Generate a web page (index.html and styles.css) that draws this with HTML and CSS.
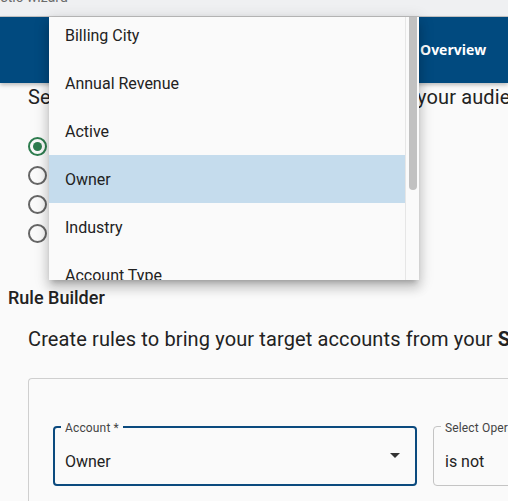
FILE: index.html
```html
<!DOCTYPE html>
<html>
<head>
<meta charset="utf-8">
<link rel="stylesheet" href="styles.css">
</head>
<body>
<div class="tabstrip"><span class="tabtitle">elastic-wizard</span></div>
<header class="appbar">
  <nav class="nav"><span class="nav-item">Overview</span></nav>
</header>
<main class="page">
  <p class="intro">Select one of the following options to build your audience</p>
  <div class="radios">
    <label class="radio-row"><span class="radio checked"></span><span class="radio-label">Rules</span></label>
    <label class="radio-row"><span class="radio"></span><span class="radio-label">List</span></label>
    <label class="radio-row"><span class="radio"></span><span class="radio-label">Report</span></label>
    <label class="radio-row"><span class="radio"></span><span class="radio-label">Upload</span></label>
  </div>
  <h2 class="section-title">Rule Builder</h2>
  <p class="lead">Create rules to bring your target accounts from your <b>Salesforce</b></p>
  <div class="rule-box">
    <div class="rule-row">
      <div class="field focused">
        <span class="field-label">Account *</span>
        <span class="field-value">Owner</span>
        <span class="caret"></span>
      </div>
      <div class="field">
        <span class="field-label">Select Operator</span>
        <span class="field-value">is not</span>
      </div>
    </div>
  </div>
</main>
<div class="menu">
  <div class="menu-scroll">
    <ul class="menu-list">
      <li class="menu-item">Billing City</li>
      <li class="menu-item">Annual Revenue</li>
      <li class="menu-item">Active</li>
      <li class="menu-item selected">Owner</li>
      <li class="menu-item">Industry</li>
      <li class="menu-item">Account Type</li>
    </ul>
  </div>
  <div class="scrollbar"><div class="thumb"></div></div>
</div>
</body>
</html>
```
FILE: styles.css
```css
* { box-sizing: border-box; }
html, body { margin: 0; padding: 0; }
body {
  background: #fafafa;
  font-family: Roboto, "Liberation Sans", sans-serif;
  color: #222;
  width: 508px;
  height: 501px;
  overflow: hidden;
  position: relative;
}
.tabstrip {
  height: 17px;
  background: #eff0f2;
  border-bottom: 1px solid #c5c5c5;
  overflow: hidden;
}
.tabtitle {
  display: block;
  margin-top: -11px;
  margin-left: -18px;
  font-size: 14px;
  line-height: 16px;
  color: #6b6b6b;
}
.appbar {
  height: 66px;
  background: #014a7f;
  display: flex;
  align-items: center;
  justify-content: flex-end;
  box-shadow: 0 2px 4px rgba(0,0,0,0.25);
  position: relative;
}
.nav { display: flex; }
.nav-item {
  font-family: "Open Sans", "DejaVu Sans", sans-serif;
  font-weight: 700;
  font-size: 14px;
  line-height: 18px;
  color: #fff;
  width: 88px;
}
.page { overflow: hidden; }
.intro {
  margin: 1px 0 0 28px;
  font-size: 20px;
  line-height: 26px;
  letter-spacing: 0.12px;
  white-space: nowrap;
  color: #222;
}
.radios {
  margin: 27px 0 0 28px;
  display: flex;
  flex-direction: column;
  gap: 10px;
}
.radio-row { display: flex; align-items: center; gap: 12px; height: 19px; }
.radio {
  width: 19px;
  height: 19px;
  border-radius: 50%;
  border: 2px solid #666;
  display: flex;
  align-items: center;
  justify-content: center;
}
.radio.checked { border-color: #2e7d4f; }
.radio.checked::after {
  content: "";
  width: 9px;
  height: 9px;
  border-radius: 50%;
  background: #2e7d4f;
}
.radio-label { font-size: 16px; }
.section-title {
  margin: 44px 0 0 8px;
  font-size: 18px;
  font-weight: 500;
  line-height: 22px;
  color: #222;
}
.lead {
  margin: 17px 0 0 28px;
  font-size: 20px;
  line-height: 26px;
  letter-spacing: 0.12px;
  white-space: nowrap;
}
.lead b { font-weight: 700; }
.rule-box {
  margin: 26px 0 0 28px;
  border: 1px solid #cfcfcf;
  border-right: none;
  border-radius: 4px 0 0 0;
  height: 200px;
  padding: 47px 0 0 24px;
}
.rule-row { display: flex; gap: 16px; }
.field {
  position: relative;
  height: 60px;
  border: 1px solid #c4c4c4;
  border-radius: 4px;
  width: 200px;
  flex: none;
  padding: 0 11px;
}
.field.focused {
  width: 364px;
  border: 2px solid #0b4a7e;
  padding: 0 10px;
}
.field-label {
  position: absolute;
  top: -6px;
  left: 7px;
  padding: 0 4px;
  background: #fafafa;
  font-size: 12px;
  line-height: 14px;
  letter-spacing: 0.15px;
  color: #444;
}
.field.focused .field-label { left: 6px; top: -7px; }
.field-value {
  display: block;
  font-size: 16px;
  line-height: 20px;
  margin-top: 24px;
  color: #222;
}
.field:not(.focused) .field-value { margin-top: 25px; }
.caret {
  position: absolute;
  right: 15px;
  top: 25px;
  width: 0;
  height: 0;
  border-left: 5px solid transparent;
  border-right: 5px solid transparent;
  border-top: 5px solid #333;
}
.menu {
  position: absolute;
  left: 49px;
  top: 17px;
  width: 370px;
  height: 263px;
  background: #fafafa;
  display: flex;
  box-shadow: 0 5px 5px -3px rgba(0,0,0,0.2), 0 8px 10px 1px rgba(0,0,0,0.14), 0 3px 14px 2px rgba(0,0,0,0.12);
  overflow: hidden;
  z-index: 5;
}
.menu-scroll { flex: 1; overflow: hidden; }
.menu-list {
  list-style: none;
  margin: -6px 0 0 0;
  padding: 0;
}
.menu-item {
  height: 48px;
  display: flex;
  align-items: center;
  padding-left: 16px;
  font-size: 16px;
  color: #222;
}
.menu-item.selected { background: #c5dced; }
.scrollbar {
  width: 14px;
  border-left: 1px solid #e6e6e6;
  background: #fafafa;
  padding: 0 2px 0 3px;
}
.thumb {
  height: 173px;
  background: #c1c1c1;
  border-radius: 0 0 4px 4px;
}
```
